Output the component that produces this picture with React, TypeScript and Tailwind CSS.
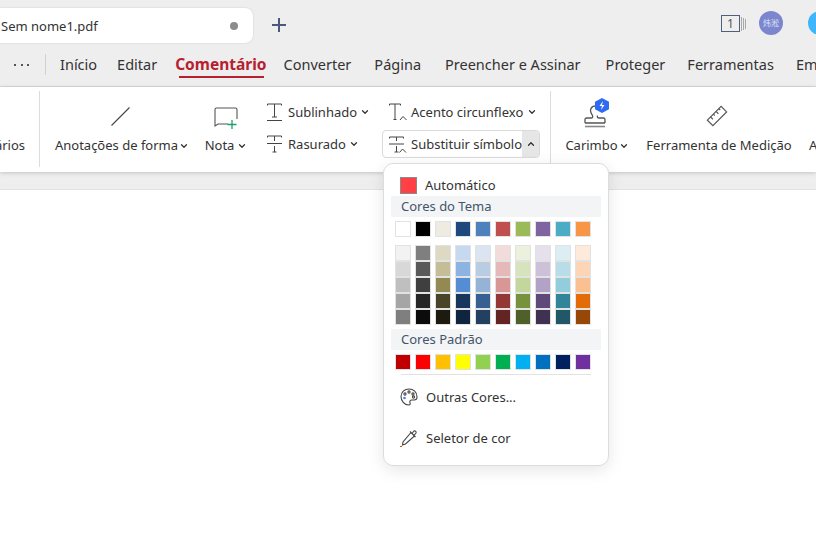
import { ChevronDown, ChevronUp } from "lucide-react";

const font = "font-['Noto_Sans','Open_Sans',sans-serif]";

const themeRow = [
  "bg-[#ffffff]", "bg-[#000000]", "bg-[#eeece1]", "bg-[#1f497d]", "bg-[#4f81bd]",
  "bg-[#c0504d]", "bg-[#9bbb59]", "bg-[#8064a2]", "bg-[#4bacc6]", "bg-[#f79646]",
];

const shades = [
  ["bg-[#f2f2f2]", "bg-[#d8d8d8]", "bg-[#bfbfbf]", "bg-[#a5a5a5]", "bg-[#7f7f7f]"],
  ["bg-[#7f7f7f]", "bg-[#595959]", "bg-[#3f3f3f]", "bg-[#262626]", "bg-[#0c0c0c]"],
  ["bg-[#ddd9c3]", "bg-[#c4bd97]", "bg-[#938953]", "bg-[#494429]", "bg-[#1d1b10]"],
  ["bg-[#c6d9f0]", "bg-[#8db3e2]", "bg-[#548dd4]", "bg-[#17365d]", "bg-[#0f243e]"],
  ["bg-[#dbe5f1]", "bg-[#b8cce4]", "bg-[#95b3d7]", "bg-[#366092]", "bg-[#244061]"],
  ["bg-[#f2dcdb]", "bg-[#e5b9b7]", "bg-[#d99694]", "bg-[#953734]", "bg-[#632423]"],
  ["bg-[#ebf1dd]", "bg-[#d7e3bc]", "bg-[#c3d69b]", "bg-[#76923c]", "bg-[#4f6128]"],
  ["bg-[#e5e0ec]", "bg-[#ccc1d9]", "bg-[#b2a2c7]", "bg-[#5f497a]", "bg-[#3f3151]"],
  ["bg-[#dbeef3]", "bg-[#b7dde8]", "bg-[#92cddc]", "bg-[#31859b]", "bg-[#205867]"],
  ["bg-[#fdeada]", "bg-[#fbd5b5]", "bg-[#fac08f]", "bg-[#e36c09]", "bg-[#974806]"],
];

const standardRow = [
  "bg-[#c00000]", "bg-[#ff0000]", "bg-[#ffc000]", "bg-[#ffff00]", "bg-[#92d050]",
  "bg-[#00b050]", "bg-[#00b0f0]", "bg-[#0070c0]", "bg-[#002060]", "bg-[#7030a0]",
];

function Caret({ className = "" }: { className?: string }) {
  return <ChevronDown className={`h-[10px] w-[10px] shrink-0 text-[#333] ${className}`} strokeWidth={3} />;
}

function Swatches({ colors }: { colors: string[] }) {
  return (
    <div className="flex gap-[4px] pl-[11px]">
      {colors.map((c, i) => (
        <div key={i} className={`h-[16px] w-[16px] border border-[#e2e2e2] ${c}`} />
      ))}
    </div>
  );
}

function SectionTitle({ children }: { children: string }) {
  return (
    <div className="mx-[7px] flex h-[21px] items-center bg-[#f2f4f6] pl-[10px] text-[13px] text-[#44546a]">
      {children}
    </div>
  );
}

function TextMarkIcon({ kind }: { kind: "under" | "strike" | "caret" | "replace" }) {
  return (
    <svg className="shrink-0" width="18" height="20" viewBox="0 0 18 20" fill="none" stroke="#444" strokeWidth="1">
      {kind === "under" && <path d="M.5 3.500v-1.500h14v1.500M7.500 2v13M5 15h5M0 18.500h15" />}
      {kind === "strike" && <path d="M.5 3.500v-1.500h14v1.500M7.500 2v5M7.500 12v6M5.500 18h4M0 9.500h15" />}
      {kind === "caret" && <path d="M.5 3.500v-1.500h11v1.500M6 2v15.500M4.500 17.500h3M11 18l3-3.500 3.500 3.500" />}
      {kind === "replace" && <path d="M.5 4.500v-1.500h14v1.500M7.500 3v4M7.500 12v6M5.500 18h4M0 10h15M10.500 18.500l3-3.500 3.500 3.500" />}
    </svg>
  );
}

function SmallTool({ kind, label, gap }: { kind: "under" | "strike" | "caret"; label: string; gap: string }) {
  return (
    <div className={`flex h-[28px] items-center ${gap}`}>
      <TextMarkIcon kind={kind} />
      <span>{label}</span>
      <Caret />
    </div>
  );
}

export default function App() {
  return (
    <div className={`relative h-[555px] w-[816px] overflow-hidden bg-white text-[13px] leading-none text-[#333] ${font}`}>
      {/* tab bar */}
      <div className="flex h-[43px] items-end bg-[#eeeeee]">
        <div className="flex h-[35px] w-[253px] shrink-0 items-center justify-between rounded-r-[8px] bg-white pl-[1px] pr-[15px] pt-[1px] shadow-[0_0_2px_rgba(0,0,0,0.15)]">
          <span className="text-[#333]">Sem nome1.pdf</span>
          <span className="h-[8px] w-[8px] rounded-full bg-[#8c8c8c]" />
        </div>
        <svg className="mb-[11px] ml-[19px] shrink-0" width="14" height="14" viewBox="0 0 14 14" stroke="#4a5a78" strokeWidth="2">
          <path d="M7 0v14M0 7h14" />
        </svg>
        <svg className="mb-[10px] ml-[435px] shrink-0" width="25" height="18" viewBox="0 0 25 18" fill="none">
          <rect x=".5" y=".5" width="18" height="16" stroke="#4f5f80" />
          <path d="M20.500 2v14M22.500 3v12M24.500 4v10" stroke="#a8a8a8" />
          <text x="6" y="13" fontSize="12" fill="#555">1</text>
        </svg>
        <div className="mb-[8px] ml-[13px] flex h-[24px] w-[24px] shrink-0 items-center justify-center rounded-full bg-[#7b86cf] font-['Noto_Sans_CJK_SC',sans-serif] text-[8px] text-[#dfe2f5]">
          炜淞
        </div>
        <div className="mb-[8px] ml-[25px] h-[24px] w-[24px] shrink-0 rounded-full bg-[#3fb6fb]" />
      </div>

      {/* menu row */}
      <div className="flex h-[44px] items-center whitespace-nowrap border-b border-[#d9d9d9] bg-[#eeeeee] text-[14.500px]">
        <span className="ml-[14px] flex w-[15px] shrink-0 justify-between">
          <i className="h-[2px] w-[2px] bg-[#555]" />
          <i className="h-[2px] w-[2px] bg-[#555]" />
          <i className="h-[2px] w-[2px] bg-[#555]" />
        </span>
        <span className="ml-[16px] h-[21px] w-px shrink-0 bg-[#d2d2d2]" />
        <span className="ml-[14px] shrink-0">Início</span>
        <span className="ml-[20px] shrink-0">Editar</span>
        <span className="relative ml-[18px] shrink-0 text-[15.500px] font-bold text-[#b7202e]">
          Comentário
          <span className="absolute -bottom-[6px] left-[4px] right-[3px] h-[2px] bg-[#b7202e]" />
        </span>
        <span className="ml-[17px] shrink-0">Converter</span>
        <span className="ml-[23px] shrink-0">Página</span>
        <span className="ml-[24px] shrink-0">Preencher e Assinar</span>
        <span className="ml-[25px] shrink-0">Proteger</span>
        <span className="ml-[22px] shrink-0">Ferramentas</span>
        <span className="ml-[22px] shrink-0">Em</span>
      </div>

      {/* ribbon */}
      <div className="relative flex h-[85px] items-start whitespace-nowrap bg-white shadow-[0_1px_4px_rgba(0,0,0,0.18)]">
        <div className="mt-[4px] flex h-[76px] w-[40px] shrink-0 items-start justify-end border-r border-[#dcdcdc] pr-[14px] pt-[48px]">
          <span>ários</span>
        </div>

        <div className="ml-[14px] flex w-[136px] shrink-0 flex-col items-center pt-[20px]">
          <svg className="-ml-[3px]" width="19" height="19" viewBox="0 0 19 19" stroke="#444" strokeWidth="1.100">
            <path d="M.5 18.500L18.500 .5" />
          </svg>
          <div className="mt-[13px] flex items-center gap-[1px]">
            <span>Anotações de forma</span>
            <Caret />
          </div>
        </div>

        <div className="ml-[15px] flex w-[42px] shrink-0 flex-col items-center pt-[19px]">
          <svg width="26" height="24" viewBox="0 0 26 24" fill="none" stroke="#555" strokeWidth="1.100">
            <path d="M15 18H5l-3 2V3.500A1.500 1.500 0 0 1 3.500 2h19A1.500 1.500 0 0 1 24 3.500V13" />
            <path d="M19 14v9M14.500 18.500h9" stroke="#1f9d6b" strokeWidth="1.300" />
          </svg>
          <div className="mt-[9px] flex items-center gap-[3px]">
            <span>Nota</span>
            <Caret />
          </div>
        </div>

        <div className="ml-[20px] flex w-[115px] shrink-0 flex-col gap-[4px] pt-[11px]">
          <SmallTool kind="under" label="Sublinhado" gap="gap-[3px]" />
          <SmallTool kind="strike" label="Rasurado" gap="gap-[3px]" />
        </div>

        <div className="flex w-[158px] shrink-0 flex-col gap-[4px] pt-[11px]">
          <div className="pl-[7px]">
            <SmallTool kind="caret" label="Acento circunflexo" gap="gap-[4px]" />
          </div>
          <div className="flex h-[28px] items-stretch overflow-hidden rounded-[4px] border border-[#d9d9d9]">
            <div className="flex flex-1 items-center gap-[4px] pl-[6px]">
              <TextMarkIcon kind="replace" />
              <span>Substituir símbolo</span>
            </div>
            <div className="flex w-[17px] shrink-0 items-center justify-center bg-[#e6e6e6]">
              <ChevronUp className="h-[10px] w-[10px] text-[#333]" strokeWidth={3} />
            </div>
          </div>
        </div>

        <div className="ml-[10px] mt-[4px] h-[76px] w-px shrink-0 bg-[#dcdcdc]" />

        <div className="ml-[14px] flex w-[64px] shrink-0 flex-col items-center pt-[11px]">
          <svg width="26" height="30" viewBox="0 0 26 30" fill="none">
            <path d="M1 25v-3.500A1.500 1.500 0 0 1 2.500 20H7c1.500 0 2-1 1.500-2.500C8 16 6.500 15 6.500 12.500A5 5 0 0 1 11 8M21 25v-3.500A1.500 1.500 0 0 0 19.500 20H15c-1.500 0-2-1-1.500-2.500M1 25h20" stroke="#555" strokeWidth="1.300" />
            <path d="M1 28.500h20" stroke="#888" strokeWidth="1.600" />
            <path d="M18 0l7 3.700v7.600l-7 3.700-7-3.700V3.700z" fill="#2f6bf2" />
            <path d="M19 3l-3.500 5h2.500l-1 4 3.500-5h-2.500z" fill="#fff" />
          </svg>
          <div className="mt-[11px] flex items-center gap-[1px]">
            <span>Carimbo</span>
            <Caret />
          </div>
        </div>

        <div className="ml-[17px] flex w-[146px] shrink-0 flex-col items-center pt-[18px]">
          <svg className="-ml-[4px]" width="22" height="22" viewBox="0 0 24 24" fill="none" stroke="#555" strokeWidth="1.300">
            <path d="M1.500 16.500L16.500 1.500l6 6-15 15z" />
            <path d="M5 13l2.500 2.500M8 10l1.500 1.500M11 7l2.500 2.500M14 4l1.500 1.500" />
          </svg>
          <span className="mt-[12px]">Ferramenta de Medição</span>
        </div>

        <span className="ml-[17px] pt-[52px]">A</span>
      </div>

      {/* grey strip above the page */}
      <div className="h-[18px] border-b border-[#e2e2e2] bg-[#eeeeee]" />

      {/* colour menu */}
      <div className="absolute left-[383px] top-[163px] h-[303px] w-[226px] rounded-[10px] border border-[#dddddd] bg-white pt-[11px] shadow-[0_4px_16px_rgba(0,0,0,0.10)]">
        <div className="flex h-[21px] items-center pl-[16px]">
          <span className="h-[17px] w-[17px] border border-[#8a8a8a] bg-[#ff4044]" />
          <span className="ml-[8px]">Automático</span>
        </div>
        <SectionTitle>Cores do Tema</SectionTitle>
        <div className="pt-[4px]">
          <Swatches colors={themeRow} />
        </div>
        <div className="flex gap-[4px] pl-[11px] pt-[8px]">
          {shades.map((col, i) => (
            <div key={i} className="flex flex-col">
              {col.map((c, j) => (
                <div key={j} className={`h-[16px] w-[16px] border border-[#e2e2e2] ${c}`} />
              ))}
            </div>
          ))}
        </div>
        <div className="pt-[4px]">
          <SectionTitle>Cores Padrão</SectionTitle>
        </div>
        <div className="pt-[4px]">
          <Swatches colors={standardRow} />
        </div>
        <div className="mx-[17px] mt-[4px] h-px bg-[#e2e2e2]" />
        <div className="flex h-[44px] items-center gap-[8px] pl-[16px]">
          <svg width="18" height="18" viewBox="0 0 18 18" fill="none" stroke="#444" strokeWidth="1.100">
            <path d="M9 1C4.500 1 1 4.300 1 8.500S4.500 17 8.500 17c1.800 0 2-1.300 1.500-2.300-.6-1.200 0-2.700 1.700-2.700H14c1.800 0 3-1.300 3-3.300C17 4.200 13.500 1 9 1z" />
            <circle cx="5" cy="6" r="1.100" />
            <circle cx="9" cy="4" r="1.100" />
            <circle cx="13" cy="6" r="1.100" />
            <circle cx="4.500" cy="10" r="1.300" fill="#4a7df0" stroke="none" />
            <circle cx="13.500" cy="9" r="1.100" />
          </svg>
          <span>Outras Cores...</span>
        </div>
        <div className="mt-[-3px] flex h-[44px] items-center gap-[8px] pl-[16px]">
          <svg width="18" height="18" viewBox="0 0 18 18" fill="none" stroke="#444" strokeWidth="1.100">
            <path d="M11 3.500l3.500 3.500L5.500 15 2.500 16 3 13zM10 2.500l5.500 5.500M12 4.500l2-2.500a1.500 1.500 0 0 1 2 2l-2 2.500" />
            <rect x="0" y="17" width="2" height="1.500" fill="#c2571a" stroke="none" />
          </svg>
          <span>Seletor de cor</span>
        </div>
      </div>
    </div>
  );
}
